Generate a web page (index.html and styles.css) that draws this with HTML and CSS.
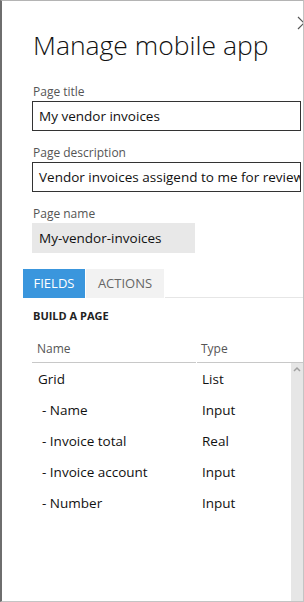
FILE: index.html
```html
<!DOCTYPE html>
<html>
<head>
<meta charset="utf-8">
<link rel="stylesheet" href="styles.css">
</head>
<body>
<div class="panel">
  <svg class="close" width="8" height="14" viewBox="0 0 8 14"><polyline points="1,1 7,7 1,13" fill="none" stroke="#555" stroke-width="1.2"/></svg>
  <h1 class="title">Manage mobile app</h1>
  <div class="field">
    <div class="label">Page title</div>
    <div class="input">My vendor invoices</div>
  </div>
  <div class="field">
    <div class="label">Page description</div>
    <div class="input">Vendor invoices assigend to me for review</div>
  </div>
  <div class="field">
    <div class="label">Page name</div>
    <div class="input readonly">My-vendor-invoices</div>
  </div>
  <div class="tabs">
    <div class="tab active">FIELDS</div>
    <div class="tab">ACTIONS</div>
    <div class="tabline"></div>
  </div>
  <div class="section">BUILD A PAGE</div>
  <div class="table">
    <div class="thead">
      <div class="th name">Name</div>
      <div class="th type">Type</div>
    </div>
    <div class="tbody">
      <div class="rows">
        <div class="row"><span class="c1">Grid</span><span class="c2">List</span></div>
        <div class="row sub"><span class="c1">- Name</span><span class="c2">Input</span></div>
        <div class="row sub"><span class="c1">- Invoice total</span><span class="c2">Real</span></div>
        <div class="row sub"><span class="c1">- Invoice account</span><span class="c2">Input</span></div>
        <div class="row sub"><span class="c1">- Number</span><span class="c2">Input</span></div>
      </div>
      <div class="scrollbar">
        <svg width="12" height="8" viewBox="0 0 12 8"><polyline points="3,6 6,3 9,6" fill="none" stroke="#a0a0a0" stroke-width="1.5"/></svg>
      </div>
    </div>
  </div>
</div>
</body>
</html>
```

FILE: styles.css
```css
html, body {
  margin: 0;
  padding: 0;
  background: #fff;
}
.panel {
  position: relative;
  width: 304px;
  height: 602px;
  box-sizing: border-box;
  border-top: 1px solid #b4b4b4;
  border-left: 2px solid #6e6e6e;
  border-right: 1px solid #c4c4c4;
  border-bottom: 1px solid #c4c4c4;
  overflow: hidden;
  font-family: "Open Sans", "Liberation Sans", sans-serif;
  color: #222;
  display: flex;
  flex-direction: column;
}
.close {
  position: absolute;
  right: -2px;
  top: 15px;
}
.title {
  margin: 24px 0 0 31px;
  font-size: 26.5px;
  font-weight: 300;
  line-height: 40px;
  color: #111;
  white-space: nowrap;
}
.field {
  margin-left: 30px;
  margin-top: 19px;
}
.field + .field {
  margin-top: 14px;
}
.label {
  font-size: 12px;
  line-height: 16px;
  color: #555;
  padding-left: 1px;
  margin-bottom: 1px;
}
.input {
  width: 269px;
  height: 30px;
  box-sizing: border-box;
  border: 1px solid #333;
  padding: 0 0 0 6px;
  font-size: 13.5px;
  line-height: 28px;
  color: #111;
  white-space: nowrap;
  overflow: hidden;
}
.input.readonly {
  width: 163px;
  border-color: #e8e8e8;
  background: #e8e8e8;
  line-height: 28px;
}
.tabs {
  display: flex;
  margin: 16px 0 0 21px;
  height: 29px;
}
.tab {
  font-size: 13px;
  line-height: 29px;
  color: #666;
  background: #f2f2f2;
  margin-right: 1px;
  box-sizing: border-box;
  text-align: center;
  width: 78px;
}
.tab.active {
  background: #3a96dd;
  color: #fff;
  width: 62px;
}
.tabline {
  flex: 1;
  border-bottom: 1px solid #e6e6e6;
}
.section {
  margin: 10px 0 0 31px;
  font-size: 11px;
  font-weight: 700;
  line-height: 16px;
  color: #222;
}
.table {
  margin-left: 30px;
  margin-top: 11px;
  flex: 1;
  display: flex;
  flex-direction: column;
}
.thead {
  display: flex;
  height: 28px;
  font-size: 12px;
  color: #555;
}
.th {
  height: 28px;
  line-height: 28px;
  box-sizing: border-box;
  border-bottom: 1px solid #c8c8c8;
}
.th.name {
  width: 164px;
  padding-left: 5px;
  margin-right: 1px;
}
.th.type {
  flex: 1;
  padding-left: 4px;
}
.tbody {
  flex: 1;
  display: flex;
}
.rows {
  flex: 1;
}
.row {
  display: flex;
  height: 31px;
  align-items: center;
  font-size: 13.5px;
  color: #111;
}
.c1 {
  width: 164px;
  padding-left: 6px;
  box-sizing: border-box;
}
.row.sub .c1 {
  padding-left: 10px;
}
.c2 {
  padding-left: 6px;
}
.scrollbar {
  width: 12px;
  background: #e6e6e6;
  display: flex;
  justify-content: center;
  align-items: flex-start;
  padding-top: 2px;
}
```
